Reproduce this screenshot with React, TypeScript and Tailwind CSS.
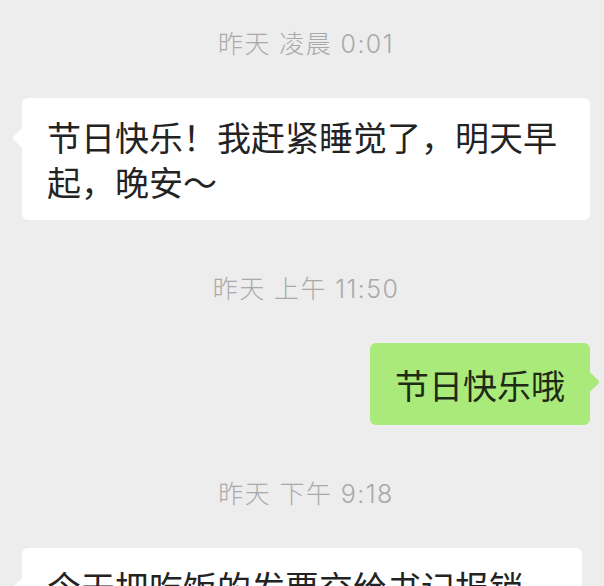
import React from "react";

type Msg =
  | { kind: "time"; text: string }
  | { kind: "in"; text: string; fixedWidth?: boolean }
  | { kind: "out"; text: string };

const messages: Msg[] = [
  { kind: "time", text: "昨天 凌晨 0:01" },
  { kind: "in", text: "节日快乐！我赶紧睡觉了，明天早起，晚安～" },
  { kind: "time", text: "昨天 上午 11:50" },
  { kind: "out", text: "节日快乐哦" },
  { kind: "time", text: "昨天 下午 9:18" },
  { kind: "in", text: "今天把吃饭的发票交给书记报销", fixedWidth: true },
];

const TimeStamp = ({ text }: { text: string }) => (
  <div
    className="h-[34px] leading-[34px] text-center text-[25px] font-light text-[#a9a9a9] tracking-[1.4px]"
    style={{ fontFamily: 'Inter, "Noto Sans CJK SC", sans-serif' }}
  >
    {text}
  </div>
);

const Incoming = ({ text, fixedWidth }: { text: string; fixedWidth?: boolean }) => (
  <div
    className={`relative self-start rounded-[6px] bg-white px-[25px] py-[16px] text-[34px] leading-[45px] text-[#232323] ${
      fixedWidth ? "w-[560px]" : "max-w-full"
    }`}
  >
    <span className="absolute left-[-7px] top-[33px] h-[14px] w-[14px] rotate-45 rounded-[2px] bg-white" />
    <span className="relative">{text}</span>
  </div>
);

const Outgoing = ({ text }: { text: string }) => (
  <div className="relative self-end flex h-[82px] items-center rounded-[6px] bg-[#a9ea7a] px-[25px] text-[34px] leading-[45px] text-[#1e2a16]">
    <span className="absolute right-[-7px] top-[32px] h-[14px] w-[14px] rotate-45 rounded-[2px] bg-[#a9ea7a]" />
    <span className="relative">{text}</span>
  </div>
);

export default function App() {
  return (
    <div
      className="flex h-screen flex-col overflow-hidden bg-[#ededed] pl-[22px] pr-[14px] pt-[27px]"
      style={{ fontFamily: '"Noto Sans CJK SC", "Noto Sans", sans-serif' }}
    >
      {messages.map((m, i) => {
        if (m.kind === "time") {
          return (
            <div key={i} className={i === 0 ? "" : "mt-[52px]"}>
              <TimeStamp text={m.text} />
            </div>
          );
        }
        return (
          <div key={i} className="mt-[37px] flex flex-col">
            {m.kind === "in" ? (
              <Incoming text={m.text} fixedWidth={m.fixedWidth} />
            ) : (
              <Outgoing text={m.text} />
            )}
          </div>
        );
      })}
    </div>
  );
}
